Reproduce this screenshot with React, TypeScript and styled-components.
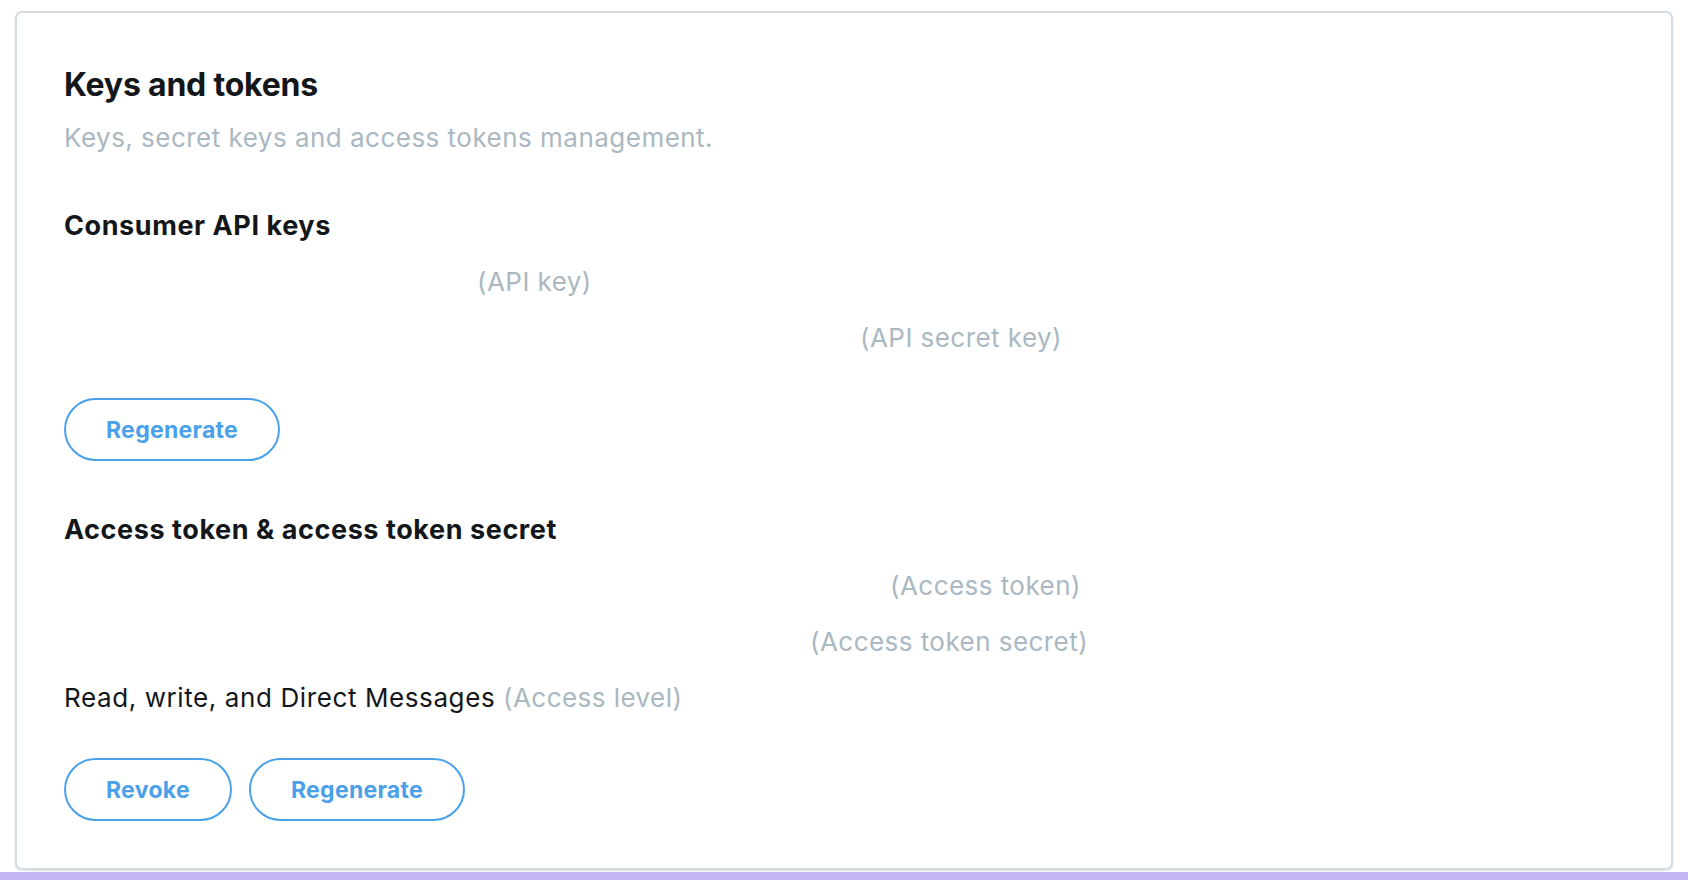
import React from "react";
import styled, { createGlobalStyle } from "styled-components";

const GlobalStyle = createGlobalStyle`
  html, body {
    margin: 0;
    padding: 0;
    background: #ffffff;
  }
  body {
    font-family: Inter, "Noto Sans", "Liberation Sans", sans-serif;
    -webkit-font-smoothing: antialiased;
  }
`;

const Page = styled.div`
  height: 880px;
  display: flex;
  flex-direction: column;
  box-sizing: border-box;
  overflow: hidden;
`;

const CardArea = styled.div`
  flex: 1;
  display: flex;
  padding: 11px 15px 2px 15px;
  min-height: 0;
`;

const Card = styled.section`
  flex: 1;
  box-sizing: border-box;
  border: 2px solid #d3dce2;
  border-radius: 7px;
  box-shadow: 0 1px 2px rgba(0, 0, 0, 0.12);
  background: #ffffff;
  padding: 53px 48px 0 47px;
  display: flex;
  flex-direction: column;
`;

const Title = styled.h2`
  margin: 0;
  font-size: 32px;
  line-height: 38px;
  font-weight: 700;
  color: #14171a;
  letter-spacing: -0.2px;
`;

const Subtitle = styled.p`
  margin: 18px 0 0 0;
  font-size: 26px;
  line-height: 32px;
  color: #aab8c2;
  letter-spacing: 0.48px;
`;

const SectionTitle = styled.h3<{ $top: number }>`
  margin: ${(p) => p.$top}px 0 0 0;
  font-size: 27px;
  line-height: 32px;
  font-weight: 700;
  color: #14171a;
  letter-spacing: 0.58px;
`;

const Rows = styled.div`
  margin-top: 12px;
  display: flex;
  flex-direction: column;
`;

const Row = styled.div`
  font-size: 26px;
  line-height: 56px;
  color: #14171a;
  white-space: nowrap;
  letter-spacing: 0.45px;
`;

const Strong = styled.span`
  letter-spacing: 0.6px;
`;

const Redacted = styled.span<{ $w: number }>`
  display: inline-block;
  width: ${(p) => p.$w}px;
`;

const Hint = styled.span`
  color: #aab8c2;
`;

const Actions = styled.div`
  margin-top: 32px;
  display: flex;
  gap: 17px;
`;

const PillButton = styled.button`
  height: 63px;
  box-sizing: border-box;
  padding: 0 40px;
  border: 2px solid #4aa1ea;
  border-radius: 999px;
  background: #ffffff;
  color: #4aa1ea;
  font-family: Inter, "Noto Sans", "Liberation Sans", sans-serif;
  font-size: 23px;
  font-weight: 700;
  letter-spacing: 0.3px;
  cursor: pointer;
`;

const Band = styled.div`
  height: 8px;
  background: #c5b7f5;
  flex-shrink: 0;
`;

export default function App() {
  return (
    <>
      <GlobalStyle />
      <Page>
        <CardArea>
          <Card>
            <Title>Keys and tokens</Title>
            <Subtitle>Keys, secret keys and access tokens management.</Subtitle>

            <SectionTitle $top={56}>Consumer API keys</SectionTitle>
            <Rows>
              <Row>
                <Redacted $w={413} />
                <Hint>(API key)</Hint>
              </Row>
              <Row>
                <Redacted $w={796} />
                <Hint>(API secret key)</Hint>
              </Row>
            </Rows>
            <Actions>
              <PillButton>Regenerate</PillButton>
            </Actions>

            <SectionTitle $top={53}>Access token &amp; access token secret</SectionTitle>
            <Rows>
              <Row>
                <Redacted $w={826} />
                <Hint>(Access token)</Hint>
              </Row>
              <Row>
                <Redacted $w={746} />
                <Hint>(Access token secret)</Hint>
              </Row>
              <Row>
                <Strong>Read, write, and Direct Messages</Strong> <Hint>(Access level)</Hint>
              </Row>
            </Rows>
            <Actions>
              <PillButton>Revoke</PillButton>
              <PillButton>Regenerate</PillButton>
            </Actions>
          </Card>
        </CardArea>
        <Band />
      </Page>
    </>
  );
}
